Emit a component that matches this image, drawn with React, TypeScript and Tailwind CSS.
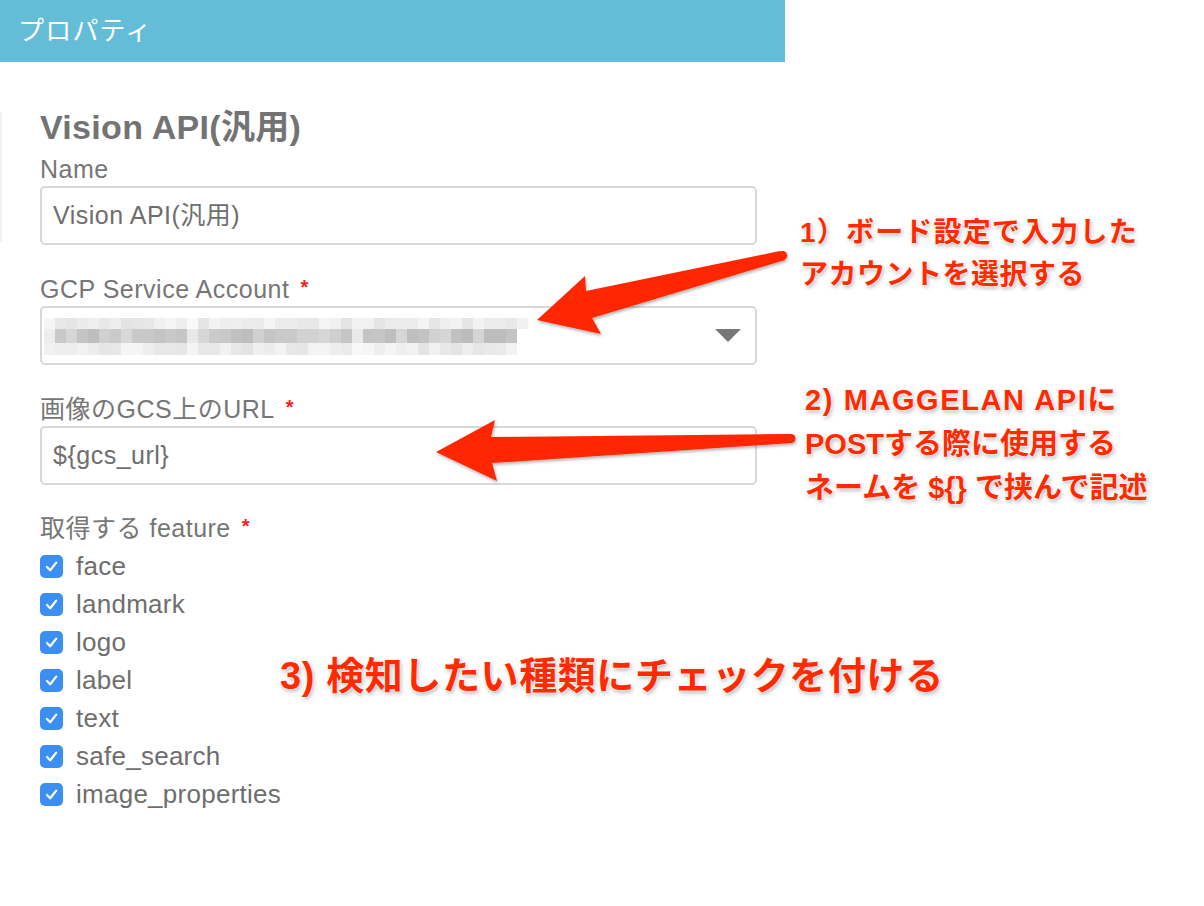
import React from "react";

const FONT = '"Liberation Sans", "Noto Sans CJK JP", sans-serif';

function rand(seed: number) {
  let s = seed;
  return () => {
    s = (s * 9301 + 49297) % 233280;
    return s / 233280;
  };
}

const mosaic = (() => {
  const r = rand(7);
  const cells: { x: number; y: number; w: number; h: number; c: string }[] = [];
  const words = [
    [55, 178],
    [190, 345],
    [360, 508],
  ];
  const inWord = (x: number) => words.some(([a, b]) => x >= a && x < b);
  for (let x = 44; x < 528; x += 11) {
    const w = inWord(x);
    const top = w ? 228 + Math.floor(r() * 18) : 240 + Math.floor(r() * 12);
    const mid = w ? 188 + Math.floor(r() * 30) : 225 + Math.floor(r() * 22);
    const bot = w ? 228 + Math.floor(r() * 18) : 240 + Math.floor(r() * 12);
    const g = (v: number) => `rgb(${v},${v},${v})`;
    if (x < 518) cells.push({ x, y: 318, w: 11, h: 11, c: g(top) });
    if (x < 510) cells.push({ x, y: 329, w: 11, h: 14, c: g(mid) });
    if (x < 510) cells.push({ x, y: 343, w: 11, h: 12, c: g(bot) });
  }
  return cells;
})();

function Check() {
  return (
    <span className="w-[23px] h-[23px] rounded-[5px] bg-[#3b8ef2] flex items-center justify-center shrink-0">
      <svg width="15" height="15" viewBox="0 0 15 15">
        <path d="M3 8 L6.2 11.2 L12.2 3.6" fill="none" stroke="#fff" strokeWidth="2.3" strokeLinecap="round" strokeLinejoin="round" />
      </svg>
    </span>
  );
}

function Label({ text, req }: { text: string; req?: boolean }) {
  return (
    <div className="h-[30px] leading-[30px] text-[25px] text-[#767676] tracking-[0.02em] flex items-center">
      <span>{text}</span>
      {req && <span className="ml-[11px] text-[#ff1a1a] text-[20px] font-bold self-start leading-[26px]">*</span>}
    </div>
  );
}

const annot =
  "text-[#ff2a00] font-bold [text-shadow:0_0_2px_#fff,0_0_3px_#fff,1px_2px_4px_rgba(0,0,0,0.35)]";

export default function App() {
  const items = ["face", "landmark", "logo", "label", "text", "safe_search", "image_properties"];
  return (
    <div className="relative w-[1204px] h-[906px] bg-white overflow-hidden" style={{ fontFamily: FONT }}>
      <div className="w-[785px] h-[62px] bg-[#64bdd6] flex items-center pl-[18px]">
        <span className="text-white text-[26px] tracking-[1.2px] leading-none">プロパティ</span>
      </div>
      <div className="absolute left-0 top-[112px] w-[2px] h-[130px] bg-[#f2f2f2]" />
      <div className="pl-[40px] w-[757px]">
        <div className="mt-[45px] h-[40px] leading-[40px] text-[34px] font-bold text-[#737373] tracking-[0.3px]">Vision API(汎用)</div>
        <div className="mt-[7px]">
          <Label text="Name" />
        </div>
        <div className="mt-[2px] h-[59px] border-2 border-[#d8d8d8] rounded-[5px] flex items-center pl-[11px] text-[25px] text-[#6e6e6e] tracking-[0.02em]">
          Vision API(汎用)
        </div>
        <div className="mt-[29px]">
          <Label text="GCP Service Account" req />
        </div>
        <div className="mt-[2px] h-[59px] border-2 border-[#d8d8d8] rounded-[5px] flex items-center justify-end pr-[14px]">
          <svg width="26" height="13" viewBox="0 0 26 13">
            <polygon points="0,0 26,0 13,13" fill="#777" />
          </svg>
        </div>
        <div className="mt-[29px]">
          <Label text="画像のGCS上のURL" req />
        </div>
        <div className="mt-[2px] h-[59px] border-2 border-[#d8d8d8] rounded-[5px] flex items-center pl-[11px] text-[25px] text-[#6e6e6e] tracking-[0.02em]">
          {"${gcs_url}"}
        </div>
        <div className="mt-[28px]">
          <Label text="取得する feature" req />
        </div>
        <div className="mt-[4px] flex flex-col">
          {items.map((it) => (
            <div key={it} className="h-[38px] flex items-center gap-[13px]">
              <Check />
              <span className="text-[26px] text-[#6e6e6e] tracking-[0.01em] leading-none">{it}</span>
            </div>
          ))}
        </div>
      </div>

      <svg className="absolute left-0 top-0 pointer-events-none" width="1204" height="906">
        {mosaic.map((m, i) => (
          <rect key={i} x={m.x} y={m.y} width={m.w} height={m.h} fill={m.c} />
        ))}
      </svg>

      <svg className="absolute left-0 top-0 pointer-events-none" width="1204" height="906">
        <defs>
          <filter id="sh" x="-10%" y="-30%" width="120%" height="160%">
            <feDropShadow dx="1" dy="2" stdDeviation="1.5" floodColor="#000" floodOpacity="0.3" />
          </filter>
        </defs>
        <g filter="url(#sh)" fill="#ff2600">
          <polygon points="780,251 586,291 585,276 537,320 601,334 592,318 785,260" />
          <circle cx="782.5" cy="255.5" r="4.6" />
          <polygon points="790,434 491,437 495,420 436,452 497,481 492,463 792,443" />
          <circle cx="791" cy="438.5" r="4.5" />
        </g>
      </svg>

      <div className={`absolute left-[800px] top-[212px] text-[28px] leading-[42px] tracking-[1.2px] ${annot}`}>
        <div>1）ボード設定で入力した</div>
        <div className="tracking-[0.5px]">アカウントを選択する</div>
      </div>
      <div className={`absolute left-[805px] top-[378px] text-[29px] leading-[44px] ${annot}`}>
        <div className="tracking-[1.6px]">2) MAGGELAN APIに</div>
        <div>POSTする際に使用する</div>
        <div>ネームを {"${}"} で挟んで記述</div>
      </div>
      <div className={`absolute left-[280px] top-[654px] text-[38px] leading-[44px] tracking-[0.6px] ${annot}`}>
        3) 検知したい種類にチェックを付ける
      </div>
    </div>
  );
}
